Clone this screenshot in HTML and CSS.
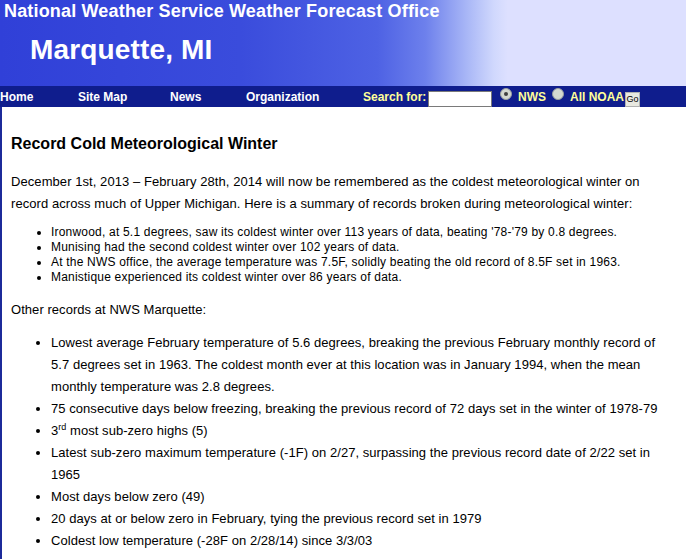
FILE: index.html
```html
<!DOCTYPE html>
<html>
<head>
<meta charset="utf-8">
<link rel="stylesheet" href="styles.css">
</head>
<body>
<div class="banner">
  <div class="office">National Weather Service Weather Forecast Office</div>
  <div class="city">Marquette, MI</div>
</div>
<div class="nav">
  <a class="nav-home">Home</a>
  <a class="nav-map">Site Map</a>
  <a class="nav-news">News</a>
  <a class="nav-org">Organization</a>
  <span class="search-label">Search for:</span>
  <span class="search-box"></span>
  <span class="radio checked"></span>
  <span class="radio-label">NWS</span>
  <span class="radio"></span>
  <span class="radio-label last">All NOAA</span>
  <span class="go">Go</span>
</div>
<div class="content">
  <h1 class="title">Record Cold Meteorological Winter</h1>
  <p class="intro">December 1st, 2013 – February 28th, 2014 will now be remembered as the coldest meteorological winter on record across much of Upper Michigan. Here is a summary of records broken during meteorological winter:</p>
  <ul class="small-list">
    <li>Ironwood, at 5.1 degrees, saw its coldest winter over 113 years of data, beating '78-'79 by 0.8 degrees.</li>
    <li>Munising had the second coldest winter over 102 years of data.</li>
    <li>At the NWS office, the average temperature was 7.5F, solidly beating the old record of 8.5F set in 1963.</li>
    <li>Manistique experienced its coldest winter over 86 years of data.</li>
  </ul>
  <p class="other">Other records at NWS Marquette:</p>
  <ul class="big-list">
    <li>Lowest average February temperature of 5.6 degrees, breaking the previous February monthly record of 5.7 degrees set in 1963. The coldest month ever at this location was in January 1994, when the mean monthly temperature was 2.8 degrees.</li>
    <li>75 consecutive days below freezing, breaking the previous record of 72 days set in the winter of <span class="nobr">1978-79</span></li>
    <li>3<sup>rd</sup> most sub-zero highs (5)</li>
    <li>Latest sub-zero maximum temperature (-1F) on 2/27, surpassing the previous record date of 2/22 set in 1965</li>
    <li>Most days below zero (49)</li>
    <li>20 days at or below zero in February, tying the previous record set in 1979</li>
    <li>Coldest low temperature (-28F on 2/28/14) since 3/3/03</li>
  </ul>
</div>
</body>
</html>
```

FILE: styles.css
```css
html, body {
  margin: 0;
  padding: 0;
  background: #ffffff;
  font-family: "Liberation Sans", Arial, sans-serif;
  color: #000000;
}
.banner {
  height: 86px;
  background: linear-gradient(90deg, #3040d8 0%, #3a4cdc 35%, #4e62e4 55%, #6d80ec 62%, #a8b6f6 68%, #d0d8fd 72%, #dde0ff 74%, #dde0ff 100%);
}
.office {
  color: #ffffff;
  font-weight: bold;
  font-size: 18px;
  letter-spacing: 0.17px;
  padding: 1px 0 0 4px;
  line-height: 21px;
  white-space: nowrap;
}
.city {
  color: #ffffff;
  font-weight: bold;
  font-size: 28px;
  letter-spacing: 0.15px;
  padding: 12px 0 0 30px;
  line-height: 32px;
  white-space: nowrap;
}
.nav {
  height: 21px;
  background: #0f1d8d;
  display: flex;
  align-items: center;
  font-size: 12px;
  font-weight: bold;
  color: #ffffff;
  white-space: nowrap;
}
.nav a { color: #ffffff; }
.nav-home { width: 78px; }
.nav-map { width: 92px; }
.nav-news { width: 76px; }
.nav-org { width: 117px; }
.search-label { color: #ffff99; margin-right: 2px; width: 63px; }
.search-box {
  width: 62px;
  height: 14px;
  background: #ffffff;
  border: 1px solid #7a7a7a;
  align-self: flex-end;
  margin-right: 8px;
}
.radio {
  width: 10px;
  height: 10px;
  border-radius: 50%;
  background: #d4d8d0;
  border: 1px solid #9aa0a0;
  align-self: flex-start;
  margin-top: 2px;
  margin-right: 6px;
  position: relative;
}
.radio.checked::after {
  content: "";
  position: absolute;
  left: 3px;
  top: 3px;
  width: 4px;
  height: 4px;
  border-radius: 50%;
  background: #404040;
}
.radio-label { color: #ffff99; margin-right: 6px; }
.radio-label.last { margin-right: 1px; }
.go {
  font-size: 9px;
  font-weight: normal;
  color: #000;
  background: #e8e8e0;
  border: 1px solid #b0b0b0;
  padding: 1px 0;
  width: 13px;
  text-align: center;
  line-height: 11px;
  align-self: flex-end;
}
.content {
  border-left: 2px solid #1c2a9a;
  padding: 1px 16px 14px 9px;
}
.title {
  font-size: 16px;
  font-weight: bold;
  margin: 26px 0 0 0;
  line-height: 19px;
}
.intro {
  font-size: 13px;
  letter-spacing: 0.07px;
  line-height: 22px;
  margin: 18px 0 0 0;
}
.small-list {
  font-size: 12px;
  letter-spacing: 0.2px;
  line-height: 15px;
  margin: 10px 0 0 0;
  padding-left: 40px;
}
.other {
  font-size: 13px;
  letter-spacing: 0.05px;
  line-height: 22px;
  margin: 14px 0 0 0;
}
.big-list {
  font-size: 13px;
  letter-spacing: 0.05px;
  line-height: 22px;
  margin: 11px 0 0 0;
  padding-left: 40px;
}
.nobr { white-space: nowrap; }
sup { font-size: 9px; line-height: 0; }
```
